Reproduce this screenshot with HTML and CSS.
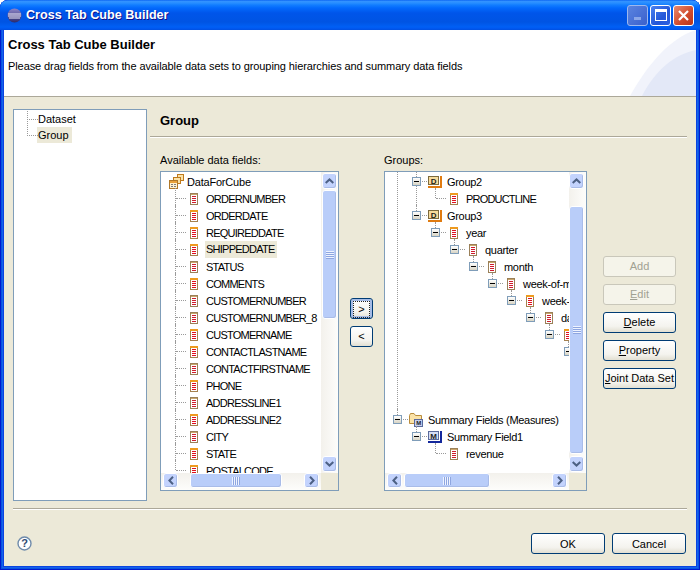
FILE: index.html
```html
<!doctype html>
<html>
<head>
    <meta charset="utf-8">
    <title>Cross Tab Cube Builder</title>
    <link rel="stylesheet" href="styles.css">
</head>
<body>
<svg class="defs" width="0" height="0">
    <defs>
        <linearGradient id="eclipse" x1="0" y1="0" x2="0" y2="1">
            <stop offset="0" stop-color="#8d84c8"/>
            <stop offset="1" stop-color="#2b2a6c"/>
        </linearGradient>
        <symbol id="fa" viewBox="0 0 8 12">
            <rect width="8" height="12" fill="#9a8058"/>
            <rect x="1" y="1" width="6" height="10" fill="#fff"/>
            <rect x="1" y="1" width="6" height="1" fill="#c9a56a"/>
            <path d="M2 3h4v1H2zM2 5h4v1H2zM2 7h4v1H2zM2 9h4v1H2z" fill="#cf1c2c"/>
        </symbol>
        <symbol id="fb" viewBox="0 0 8 12">
            <rect width="8" height="12" fill="#a5814f"/>
            <rect width="8" height="2" fill="#ee9a1e"/>
            <rect x="1" y="2" width="6" height="9" fill="#fff"/>
            <path d="M2 3h4v1H2zM2 5h4v1H2zM2 7h4v1H2zM2 9h4v1H2z" fill="#e0101f"/>
        </symbol>
        <symbol id="grp" viewBox="0 0 14 12">
            <rect x="0.5" y="0.5" width="10" height="8" fill="#f7dc9c" stroke="#7d6a3c"/>
            <rect y="10" width="12" height="2" fill="#e07b10"/>
            <rect x="12" width="2" height="12" fill="#e07b10"/>
            <text x="5.5" y="7.5" class="badge">D</text>
        </symbol>
        <symbol id="msr" viewBox="0 0 14 12">
            <rect x="0.5" y="0.5" width="10" height="8" fill="#d5def5" stroke="#5a6a9c"/>
            <rect y="10" width="12" height="2" fill="#14289c"/>
            <rect x="12" width="2" height="12" fill="#14289c"/>
            <text x="5.5" y="7.5" class="badge">M</text>
        </symbol>
        <symbol id="folder" viewBox="0 0 14 15">
            <path d="M0.5 3.5 L1.5 1.5 H5 L6.5 3.5 H12.5 V11.5 H0.5Z" fill="#fbe3a8" stroke="#b98c3c"/>
            <rect x="5.5" y="7.5" width="8" height="7" fill="#c6d0ee" stroke="#5a6a9c"/>
            <text x="9.5" y="13.4" class="badge small">M</text>
        </symbol>
        <symbol id="cube" viewBox="0 0 15 15">
            <rect x="8.5" y="0.5" width="6" height="6" fill="#fbe3a8" stroke="#c07a1c"/>
            <rect x="4.5" y="3.5" width="7" height="6" fill="#fbe3a8" stroke="#c07a1c"/>
            <rect x="0.5" y="6.5" width="8" height="8" fill="#fff3d2" stroke="#b07828"/>
            <rect x="1" y="7" width="7" height="2" fill="#e8a23c"/>
            <path d="M2 10.5h2M5 10.5h2M2 12.5h2M5 12.5h2" stroke="#7d7d7d"/>
        </symbol>
        <symbol id="up" viewBox="0 0 9 6"><path d="M0.7 5 L4.5 1.4 L8.3 5" fill="none" stroke="#4d6185" stroke-width="2"/></symbol>
        <symbol id="down" viewBox="0 0 9 6"><path d="M0.7 1 L4.5 4.6 L8.3 1" fill="none" stroke="#4d6185" stroke-width="2"/></symbol>
        <symbol id="left" viewBox="0 0 6 9"><path d="M5 0.7 L1.4 4.5 L5 8.3" fill="none" stroke="#4d6185" stroke-width="2"/></symbol>
        <symbol id="right" viewBox="0 0 6 9"><path d="M1 0.7 L4.6 4.5 L1 8.3" fill="none" stroke="#4d6185" stroke-width="2"/></symbol>
    </defs>
</svg>

<div class="window">
    <div class="titlebar">
        <svg class="app-icon" width="15" height="15" viewBox="0 0 15 15">
            <circle cx="7.5" cy="7.5" r="7" fill="url(#eclipse)"/>
            <path d="M1 6h13M1 8h13M2 10h11" stroke="#e9e6f5" stroke-width="1"/>
        </svg>
        <span class="title-text">Cross Tab Cube Builder</span>
        <div class="win-btns">
            <span class="win-btn win-min"><i></i></span>
            <span class="win-btn win-max"><i></i></span>
            <span class="win-btn win-close">
                <svg width="13" height="13" viewBox="0 0 13 13"><path d="M2 2l9 9M11 2l-9 9" stroke="#fff" stroke-width="2.2"/></svg>
            </span>
        </div>
    </div>

    <div class="client">
        <div class="banner">
            <h1>Cross Tab Cube Builder</h1>
            <p>Please drag fields from the available data sets to grouping hierarchies and summary data fields</p>
            <svg class="banner-art" width="66" height="66" viewBox="0 0 66 66">
                <path d="M66 0 C40 8 18 34 0 66 H66Z" fill="#f1f3fb"/>
                <path d="M66 20 C44 24 24 42 12 66 H66Z" fill="#e3e8f7"/>
            </svg>
        </div>

        <div class="content">
            <div class="nav-panel">
                <ul class="nav-tree">
                    <li><span>Dataset</span></li>
                    <li><span class="sel">Group</span></li>
                </ul>
            </div>

            <div class="page">
                <div class="page-title">Group</div>
                <div class="fields">
                    <div class="field-col col-data">
                        <label>Available data fields:</label>
                        <div class="frame">
                            <div class="viewport">
                                <div class="root-row"><svg class="root-icon" width="15" height="15"><use href="#cube"/></svg>DataForCube</div>
                                <ul class="tree data-tree">
                                    <li><div class="row leaf"><svg class="icon" width="8" height="12"><use href="#fa"/></svg>ORDERNUMBER</div></li>
                                    <li><div class="row leaf"><svg class="icon" width="8" height="12"><use href="#fb"/></svg>ORDERDATE</div></li>
                                    <li><div class="row leaf"><svg class="icon" width="8" height="12"><use href="#fb"/></svg>REQUIREDDATE</div></li>
                                    <li><div class="row leaf"><svg class="icon" width="8" height="12"><use href="#fb"/></svg><span class="sel">SHIPPEDDATE</span></div></li>
                                    <li><div class="row leaf"><svg class="icon" width="8" height="12"><use href="#fa"/></svg>STATUS</div></li>
                                    <li><div class="row leaf"><svg class="icon" width="8" height="12"><use href="#fb"/></svg>COMMENTS</div></li>
                                    <li><div class="row leaf"><svg class="icon" width="8" height="12"><use href="#fa"/></svg>CUSTOMERNUMBER</div></li>
                                    <li><div class="row leaf"><svg class="icon" width="8" height="12"><use href="#fa"/></svg>CUSTOMERNUMBER_8</div></li>
                                    <li><div class="row leaf"><svg class="icon" width="8" height="12"><use href="#fb"/></svg>CUSTOMERNAME</div></li>
                                    <li><div class="row leaf"><svg class="icon" width="8" height="12"><use href="#fb"/></svg>CONTACTLASTNAME</div></li>
                                    <li><div class="row leaf"><svg class="icon" width="8" height="12"><use href="#fa"/></svg>CONTACTFIRSTNAME</div></li>
                                    <li><div class="row leaf"><svg class="icon" width="8" height="12"><use href="#fb"/></svg>PHONE</div></li>
                                    <li><div class="row leaf"><svg class="icon" width="8" height="12"><use href="#fa"/></svg>ADDRESSLINE1</div></li>
                                    <li><div class="row leaf"><svg class="icon" width="8" height="12"><use href="#fb"/></svg>ADDRESSLINE2</div></li>
                                    <li><div class="row leaf"><svg class="icon" width="8" height="12"><use href="#fa"/></svg>CITY</div></li>
                                    <li><div class="row leaf"><svg class="icon" width="8" height="12"><use href="#fb"/></svg>STATE</div></li>
                                    <li><div class="row leaf"><svg class="icon" width="8" height="12"><use href="#fb"/></svg>POSTALCODE</div></li>
                                </ul>
                            </div>
                            <div class="sb-v">
                                <span class="sb-btn"><svg width="9" height="6"><use href="#up"/></svg></span>
                                <span class="thumb thumb-data-v"></span>
                                <span class="sb-fill"></span>
                                <span class="sb-btn"><svg width="9" height="6"><use href="#down"/></svg></span>
                            </div>
                            <div class="sb-h">
                                <span class="sb-btn"><svg width="6" height="9"><use href="#left"/></svg></span>
                                <span class="thumb thumb-data-h"></span>
                                <span class="sb-fill"></span>
                                <span class="sb-btn"><svg width="6" height="9"><use href="#right"/></svg></span>
                            </div>
                            <div class="sb-corner"></div>
                        </div>
                    </div>

                    <div class="move-col">
                        <button class="btn btn-move btn-focus" type="button"><span>&gt;</span></button>
                        <button class="btn btn-move" type="button">&lt;</button>
                    </div>

                    <div class="field-col col-groups">
                        <label>Groups:</label>
                        <div class="frame">
                            <div class="viewport">
                                <ul class="tree groups-tree">
                                    <li class="groups-hold">
                                        <ul>
                                            <li>
                                                <div class="row"><span class="exp"></span><svg class="icon wide" width="14" height="12"><use href="#grp"/></svg>Group2</div>
                                                <ul>
                                                    <li><div class="row leaf caps"><svg class="icon" width="8" height="12"><use href="#fb"/></svg>PRODUCTLINE</div></li>
                                                </ul>
                                            </li>
                                            <li>
                                                <div class="row"><span class="exp"></span><svg class="icon wide" width="14" height="12"><use href="#grp"/></svg>Group3</div>
                                                <ul>
                                                    <li>
                                                        <div class="row"><span class="exp"></span><svg class="icon" width="8" height="12"><use href="#fb"/></svg>year</div>
                                                        <ul><li>
                                                            <div class="row"><span class="exp"></span><svg class="icon" width="8" height="12"><use href="#fa"/></svg>quarter</div>
                                                            <ul><li>
                                                                <div class="row"><span class="exp"></span><svg class="icon" width="8" height="12"><use href="#fa"/></svg>month</div>
                                                                <ul><li>
                                                                    <div class="row"><span class="exp"></span><svg class="icon" width="8" height="12"><use href="#fa"/></svg>week-of-month</div>
                                                                    <ul><li>
                                                                        <div class="row"><span class="exp"></span><svg class="icon" width="8" height="12"><use href="#fb"/></svg>week-of-year</div>
                                                                        <ul><li>
                                                                            <div class="row"><span class="exp"></span><svg class="icon" width="8" height="12"><use href="#fa"/></svg>day-of-year</div>
                                                                            <ul><li>
                                                                                <div class="row"><span class="exp"></span><svg class="icon" width="8" height="12"><use href="#fb"/></svg>day-of-month</div>
                                                                                <ul><li>
                                                                                    <div class="row"><span class="exp"></span><svg class="icon" width="8" height="12"><use href="#fa"/></svg>day-of-week</div>
                                                                                </li></ul>
                                                                            </li></ul>
                                                                        </li></ul>
                                                                    </li></ul>
                                                                </li></ul>
                                                            </li></ul>
                                                        </li></ul>
                                                    </li>
                                                </ul>
                                            </li>
                                        </ul>
                                    </li>
                                    <li>
                                        <div class="row"><span class="exp"></span><svg class="icon wide" width="14" height="15"><use href="#folder"/></svg>Summary Fields (Measures)</div>
                                        <ul>
                                            <li>
                                                <div class="row"><span class="exp"></span><svg class="icon wide" width="14" height="12"><use href="#msr"/></svg>Summary Field1</div>
                                                <ul>
                                                    <li><div class="row leaf"><svg class="icon" width="8" height="12"><use href="#fa"/></svg>revenue</div></li>
                                                </ul>
                                            </li>
                                        </ul>
                                    </li>
                                </ul>
                            </div>
                            <div class="sb-v">
                                <span class="sb-btn"><svg width="9" height="6"><use href="#up"/></svg></span>
                                <span class="thumb thumb-groups-v"></span>
                                <span class="sb-fill"></span>
                                <span class="sb-btn"><svg width="9" height="6"><use href="#down"/></svg></span>
                            </div>
                            <div class="sb-h">
                                <span class="sb-btn"><svg width="6" height="9"><use href="#left"/></svg></span>
                                <span class="thumb thumb-groups-h"></span>
                                <span class="sb-fill"></span>
                                <span class="sb-btn"><svg width="6" height="9"><use href="#right"/></svg></span>
                            </div>
                            <div class="sb-corner"></div>
                        </div>
                    </div>

                    <div class="action-col">
                        <button class="btn" type="button" disabled>Add</button>
                        <button class="btn" type="button" disabled><u>E</u>dit</button>
                        <button class="btn" type="button"><u>D</u>elete</button>
                        <button class="btn" type="button"><u>P</u>roperty</button>
                        <button class="btn" type="button"><u>J</u>oint Data Set</button>
                    </div>
                </div>
            </div>
        </div>

        <div class="rule"></div>

        <div class="footer">
            <svg class="help" width="15" height="15" viewBox="0 0 15 15">
                <circle cx="7.5" cy="7.5" r="6.5" fill="#fff" stroke="#6f8bab" stroke-width="1.4"/>
                <text x="7.5" y="11.2" class="help-mark">?</text>
            </svg>
            <button class="btn btn-foot" type="button">OK</button>
            <button class="btn btn-foot" type="button">Cancel</button>
        </div>
    </div>
</div>
</body>
</html>
```

FILE: styles.css
```css
html,body{margin:0; padding:0; background:#fff; overflow:hidden;}
body{font:11px "Liberation Sans","DejaVu Sans",sans-serif; color:#000;}
ul{list-style:none; margin:0; padding:0;}
.defs{position:absolute;}
.badge{font:bold 8px "Liberation Sans",sans-serif; text-anchor:middle; fill:#1c1c1c;}
.badge.small{font-size:6px;}
.help-mark{font:bold 11px "Liberation Sans",sans-serif; text-anchor:middle; fill:#2f4a72;}

.window{width:700px; height:570px; display:flex; flex-direction:column; box-sizing:border-box; border-radius:8px 8px 0 0; background:#0a45e0; box-shadow:inset 0 0 0 1px #0019cf,inset 0 0 0 2px #0855dd,inset 0 0 0 3px #1660ee;}

.titlebar{height:30px; flex:none; display:flex; align-items:center; padding:0 6px 0 7px; border-radius:8px 8px 0 0; background:linear-gradient(#0058ee 0,#3593ff 1px,#288eff 3px,#127dff 5px,#0369fc 8px,#0055ea 13px,#0054e3 22px,#0060f5 27px,#0055ee 29px,#0050dd 30px);}
.app-icon{margin-right:4px;}
.title-text{flex:1; color:#fff; font:bold 12.6px "Liberation Sans",sans-serif; text-shadow:1px 1px #0f1089;}
.win-btns{display:flex; gap:2px;}
.win-btn{width:19px; height:19px; display:flex; align-items:center; justify-content:center; border:1px solid #fff; border-radius:3px; background:linear-gradient(135deg,#4c83f0,#2457d8 60%,#2b5fe0);}
.win-min{border-color:#9db8ee; background:linear-gradient(135deg,#5a84e0,#3a60cc);}
.win-min i{width:7px; height:3px; margin-top:6px; background:#8aa6e8;}
.win-max i{width:10px; height:8px; border:1px solid #fff; border-top-width:3px;}
.win-close{background:linear-gradient(135deg,#e88a70,#d0492a 60%,#b8341c);}

.client{flex:1; min-height:0; margin:0 4px 4px; background:#ece9d8; display:flex; flex-direction:column;}

.banner{height:67px; flex:none; position:relative; box-sizing:border-box; padding:7px 4px 0; background:#fff; border-bottom:1px solid #aca899; overflow:hidden;}
.banner h1{margin:0; font-size:13px; font-weight:bold; line-height:16px;}
.banner p{margin:6px 0 0; line-height:15px; letter-spacing:-.09px;}
.banner-art{position:absolute; right:0; top:0;}

.content{display:flex; flex:none; height:392px; padding:12px 9px 0; gap:3px;}
.nav-panel{width:134px; box-sizing:border-box; background:#fff; border:1px solid #7f9db9; padding:1px 0 0 13px;}
.nav-tree li{height:16px; line-height:16px; padding-left:11px; position:relative;}
.nav-tree li::before{content:""; position:absolute; left:0; top:0; height:8px; width:10px; border-left:1px dotted #9a9a9a; border-bottom:1px dotted #9a9a9a;}
.nav-tree li:last-child::before{top:-8px; height:16px;}
.nav-tree .sel{display:inline-block; padding:0 3px 0 1px; margin-left:-1px;}

.sel{background:#ece9d8;}

.page{flex:1; min-width:0; min-height:0; display:flex; flex-direction:column;}
.page-title{height:27px; flex:none; line-height:23px; padding-left:10px; font-size:13px; font-weight:bold; border-bottom:1px solid #aca899; box-shadow:0 1px #fff;}
.fields{flex:1; min-height:0; display:flex; padding:16px 11px 10px 10px;}
.field-col{display:flex; flex-direction:column; min-height:0;}
.field-col label{height:18px; line-height:14px; flex:none;}
.col-data{width:179px;}
.col-groups{width:203px;}
.move-col{width:45px; display:flex; flex-direction:column; align-items:center; justify-content:center; gap:7px;}
.action-col{width:89px; display:flex; flex-direction:column; align-items:flex-end; justify-content:center; gap:7px;}

.frame{flex:1; min-height:0; display:grid; grid-template-columns:minmax(0,1fr) 17px; grid-template-rows:minmax(0,1fr) 17px; background:#fff; border:1px solid #7f9db9;}
.viewport{overflow:hidden; padding-top:1px; min-width:0; min-height:0;}

.root-row{height:17px; display:flex; align-items:center; padding-left:8px; white-space:nowrap; letter-spacing:-.2px;}
.root-icon{margin-right:3px;}
.data-tree{padding-left:10px; letter-spacing:-.75px;}
.groups-tree{padding-left:8px; letter-spacing:-.3px;}
.groups-hold{padding-bottom:51px;}
.groups-tree .caps{letter-spacing:-.8px;}

.tree ul{padding-left:19px;}
.tree li{position:relative;}
.tree li::before{content:""; position:absolute; left:4px; top:-2px; bottom:0; border-left:1px dotted #9a9a9a;}
.tree li:last-child::before{bottom:auto; height:10px;}
.row{height:17px; display:flex; align-items:center; position:relative; white-space:nowrap;}
.row::before{content:""; position:absolute; left:5px; top:8px; width:10px; border-top:1px dotted #9a9a9a;}
.row.leaf{padding-left:16px;}
.icon{flex:none; margin:0 8px 0 3px; position:relative;}
.icon.wide{margin:0 5px 0 0;}
.row .sel{height:17px; line-height:17px; padding:0 2px 0 1px; margin-left:-1px;}
.exp{flex:none; width:9px; height:9px; margin-right:7px; position:relative; box-sizing:border-box; border:1px solid #7f9db9; background:linear-gradient(#fff,#d8d4c4);}
.exp::after{content:""; position:absolute; left:1px; top:3px; width:5px; height:1px; background:#000;}

.sb-v,.sb-h{display:flex; box-sizing:border-box;}
.sb-v{flex-direction:column; padding:1px; background:linear-gradient(90deg,#f3f1ec,#fdfdfb);}
.col-groups .sb-v{padding:1px 2px 1px 0;}
.sb-h{padding:0 2px 2px; height:17px; background:linear-gradient(#f3f1ec,#fdfdfb);}
.sb-corner{background:#ece9d8;}
.sb-fill{flex:1;}
.sb-btn,.thumb{display:flex; align-items:center; justify-content:center; box-sizing:border-box; border:1px solid #fff; border-radius:3px; box-shadow:inset -1px -1px #a9bce8; background:#c3d3fd;}
.sb-btn{width:15px; height:16px; flex:none;}
.sb-h .sb-btn{height:15px;}
.thumb{flex:none; background:#b9cdf9;}
.thumb::after{content:""; background:repeating-linear-gradient(#eef3ff 0 1px,#8ea6e0 1px 2px);}
.sb-v .thumb::after{width:8px; height:8px;}
.sb-h .thumb::after{width:8px; height:8px; background:repeating-linear-gradient(90deg,#eef3ff 0 1px,#8ea6e0 1px 2px);}
.thumb-data-v{height:129px; margin-top:1px;}
.thumb-groups-v{height:248px; margin-top:17px;}
.thumb-data-h{width:92px; margin-left:12px;}
.thumb-groups-h{width:86px; margin-left:2px;}

.btn{width:73px; height:21px; box-sizing:border-box; padding:0; font:inherit; color:#000; border:1px solid #003c74; border-radius:3px; background:linear-gradient(#fff,#f4f3ee 70%,#e2dfd2);}
.btn[disabled]{color:#a1a192; border-color:#c9c7ba; background:#f5f4ea;}
.btn-move{width:23px;}
.btn-focus{box-shadow:inset 0 0 0 2px #a6bce6;}
.btn-focus span{display:block; margin:2px; height:15px; line-height:14px; border:1px dotted #222;}

.rule{flex:none; height:1px; margin:7px 9px 0; background:#aca899; box-shadow:0 1px #fff;}
.footer{flex:1; display:flex; align-items:flex-start; gap:7px; padding:24px 10px 0 13px;}
.help{margin:3px auto 0 0;}
.btn-foot{width:74px;}
```
